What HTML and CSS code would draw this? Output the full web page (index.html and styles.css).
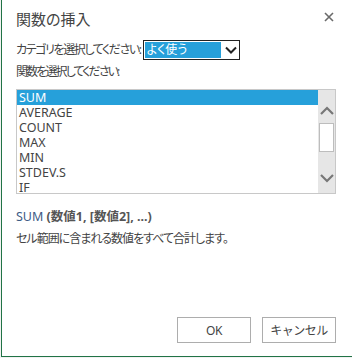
FILE: index.html
```html
<!DOCTYPE html>
<html lang="ja">
<head>
<meta charset="utf-8">
<link rel="stylesheet" href="styles.css">
</head>
<body>
<div class="dialog">
  <div class="header">
    <div class="title">関数の挿入</div>
    <svg class="close" width="10" height="10" viewBox="0 0 10 10"><path d="M1 1L9 9M9 1L1 9" stroke="#6a6a6a" stroke-width="1.6"/></svg>
  </div>
  <div class="cat-row">
    <span class="label">カテゴリを選択してください:</span>
    <div class="select">
      <span class="select-value">よく使う</span>
      <svg class="chev" width="12" height="8" viewBox="0 0 12 8"><path d="M1 1.5L6 6.5L11 1.5" fill="none" stroke="#222" stroke-width="2"/></svg>
    </div>
  </div>
  <div class="label label2">関数を選択してください:</div>
  <div class="listbox">
    <ul class="items">
      <li class="sel">SUM</li>
      <li>AVERAGE</li>
      <li>COUNT</li>
      <li>MAX</li>
      <li>MIN</li>
      <li>STDEV.S</li>
      <li>IF</li>
    </ul>
    <div class="scrollbar">
      <svg class="arrow up" width="16" height="10" viewBox="0 0 16 10"><path d="M2 8L8 2L14 8" fill="none" stroke="#777" stroke-width="2.2"/></svg>
      <div class="thumb"></div>
      <div class="track"></div>
      <svg class="arrow down" width="16" height="10" viewBox="0 0 16 10"><path d="M2 2L8 8L14 2" fill="none" stroke="#777" stroke-width="2.2"/></svg>
    </div>
  </div>
  <div class="syntax"><span class="fname">SUM</span> <b>(数値1, [数値2], ...)</b></div>
  <div class="desc">セル範囲に含まれる数値をすべて合計します。</div>
  <div class="footer">
    <button class="btn">OK</button>
    <button class="btn">キャンセル</button>
  </div>
</div>
</body>
</html>
```
FILE: styles.css
```css
html, body {
  margin: 0;
  padding: 0;
  background: #f2f2f2;
}
body {
  width: 352px;
  height: 358px;
  overflow: hidden;
  font-family: "Noto Sans", "Noto Sans CJK JP", sans-serif;
  font-feature-settings: "palt";
  color: #444;
}
.dialog {
  margin-left: 1px;
  width: 351px;
  height: 357px;
  box-sizing: border-box;
  background: #fff;
  border-left: 1px solid #217346;
  border-bottom: 1px solid #217346;
  padding: 0 16px 0 14px;
  display: flex;
  flex-direction: column;
}
.header {
  display: flex;
  justify-content: space-between;
  align-items: flex-start;
  height: 40px;
}
.title {
  font-size: 15px;
  line-height: 20px;
  margin-top: 9px;
  color: #444;
}
.close {
  margin-top: 12px;
  margin-right: 2px;
}
.label {
  font-size: 12px;
  line-height: 16px;
  color: #444;
  letter-spacing: -1.4px;
}
.cat-row {
  display: flex;
  align-items: center;
  gap: 2px;
  height: 20px;
}
.select {
  width: 97px;
  height: 20px;
  box-sizing: border-box;
  border: 1px solid #222;
  padding: 1px;
  display: flex;
  align-items: center;
}
.select-value {
  background: #26a0da;
  color: #fff;
  width: 76px;
  height: 16px;
  font-size: 12px;
  line-height: 16px;
  padding-left: 2px;
  box-sizing: border-box;
}
.chev {
  margin-left: 4px;
}
.label2 {
  margin-top: 4px;
  letter-spacing: -1.9px;
}
.listbox {
  margin-top: 9px;
  width: 320px;
  height: 105px;
  box-sizing: border-box;
  border: 1px solid #c8c8c8;
  display: flex;
  overflow: hidden;
}
.items {
  list-style: none;
  margin: 0;
  padding: 0;
  flex: 1;
}
.items li {
  font-size: 12.5px;
  line-height: 15px;
  height: 15px;
  padding-left: 2px;
  color: #444;
}
.items li.sel {
  background: #26a0da;
  color: #fff;
}
.scrollbar {
  width: 17px;
  background: #e6e6e6;
  display: flex;
  flex-direction: column;
  align-items: center;
}
.arrow {
  flex: none;
}
.arrow.up {
  margin-top: 16px;
}
.arrow.down {
  margin-bottom: 10px;
}
.thumb {
  margin-top: 7px;
  width: 15px;
  height: 29px;
  box-sizing: border-box;
  background: #fff;
  border: 1px solid #bdbdbd;
}
.track {
  flex: 1;
}
.syntax {
  margin-top: 15px;
  font-size: 12.5px;
  line-height: 16px;
}
.fname {
  color: #3d5b85;
}
.syntax b {
  font-weight: bold;
  color: #555;
}
.desc {
  margin-top: 6px;
  font-size: 12px;
  line-height: 16px;
  color: #444;
  letter-spacing: -1px;
}
.footer {
  margin-top: auto;
  margin-bottom: 13px;
  display: flex;
  justify-content: flex-end;
  gap: 11px;
}
.btn {
  width: 74px;
  height: 26px;
  box-sizing: border-box;
  background: #fff;
  border: 1px solid #adadad;
  font-family: inherit;
  font-size: 12px;
  color: #444;
  padding: 0;
  margin: 0;
  letter-spacing: -0.5px;
}
```
